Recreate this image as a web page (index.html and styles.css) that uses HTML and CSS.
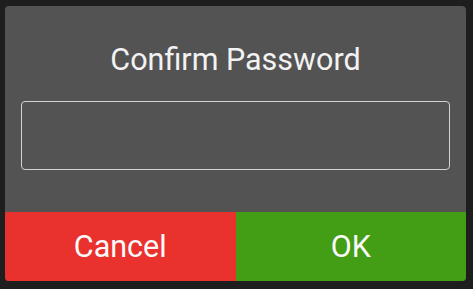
FILE: index.html
```html
<!DOCTYPE html>
<html lang="en">

<head>
    <meta charset="UTF-8">
    <meta name="viewport" content="width=device-width, initial-scale=1.0">
    <title>Confirm Password</title>
    <link rel="stylesheet" href="styles.css">
</head>

<body>
    <div class="dialog">
        <h1 class="title">Confirm Password</h1>
        <div class="field">
            <input type="password" class="input" />
        </div>
        <div class="buttons">
            <button class="btn cancel">Cancel</button>
            <button class="btn ok">OK</button>
        </div>
    </div>
</body>

</html>
```

FILE: styles.css
```css
* {
    box-sizing: border-box;
    margin: 0;
    padding: 0;
}

body {
    background: #1e1e1e;
    font-family: Roboto, "Liberation Sans", sans-serif;
    padding: 6px 7px 8px 5px;
    height: 289px;
}

.dialog {
    background: #545354;
    border-radius: 4px;
    overflow: hidden;
    display: flex;
    flex-direction: column;
    height: 275px;
}

.title {
    color: #f2f2f2;
    font-weight: normal;
    font-size: 30.5px;
    text-align: center;
    line-height: 36px;
    margin-top: 36px;
}

.field {
    padding: 0 16px;
    margin-top: 23px;
}

.input {
    display: block;
    width: 100%;
    height: 69px;
    background: transparent;
    border: 1.5px solid #d2d2d2;
    border-radius: 4px;
}

.buttons {
    display: flex;
    margin-top: auto;
    height: 69px;
}

.btn {
    flex: 1;
    border: none;
    color: #fafafa;
    font-family: Roboto, "Liberation Sans", sans-serif;
    font-size: 30.5px;
}

.cancel {
    background: #e9322e;
}

.ok {
    background: #449e15;
}
```
